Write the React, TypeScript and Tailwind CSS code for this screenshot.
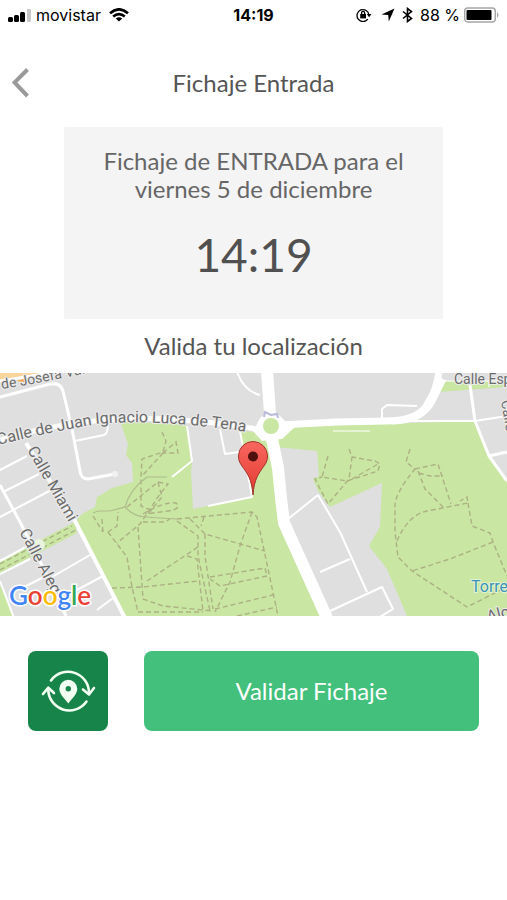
import React from 'react';

const ROADS: { d: string; w: number }[] = [
  // avenue and roundabout exits
  { d: 'M267 -2 L270 40 L272 66 L278 95 L281 125 L284 150 L327 245', w: 12 },
  { d: 'M280 52 L337 49 L385 48 Q420 48 428 30 Q437 16 439 -2', w: 7 },
  { d: 'M392 48 Q422 48 432 28 L443 6', w: 7 },
  { d: 'M400 48 L475 48 L507 43', w: 2 },
  { d: 'M382 46 V36 L387 32 L417 33', w: 2 },
  { d: 'M0 67 Q90 40 180 47 Q225 50 262 57', w: 5 },
  // north west blocks
  { d: 'M0 24 L50 11 Q60 9 63 18 L72 56 L80 98 Q81 106 88 106 L115 101', w: 3 },
  { d: 'M75 68 L104 62 Q108 61 108 51', w: 2 },
  { d: 'M0 8 Q50 0 90 -6', w: 3 },
  { d: 'M26 70 L75 148 L125 245', w: 4 },
  { d: 'M0 112 L20 149 L50 208 L66 243', w: 3 },
  { d: 'M0 97 L27 83 M3 119 L39 101 M0 144 L53 116', w: 2 },
  { d: 'M0 188 L26 174 M0 201 L30 186', w: 2 },
  { d: 'M52 204 L90 182 M62 225 L103 203 M97 237 L113 225 M20 216 L44 204 M0 208 L14 245', w: 2 },
  // around the pin
  { d: 'M187 53 L192 88 L172 104', w: 2 },
  { d: 'M220 56 L225 81 L239 79 M240 58 L252 124 L208 133', w: 2 },
  { d: 'M237 -1 Q244 18 260 22', w: 2 },
  // east blocks
  { d: 'M288 146 L318 122 L340 159 L367 219', w: 2 },
  { d: 'M320 199 L350 186 M330 238 L382 214 L393 236 L378 245', w: 2 },
  { d: 'M470 12 L475 48 L489 83 L507 108 M489 83 L507 79', w: 3 },
  { d: 'M443 8 L507 8 M489 8 V14', w: 1 },
  { d: 'M333 58 H370', w: 1 },
];

const TRAILS = [
  // west park
  'M177 146 L252 139 L257 144 L278 243',
  'M252 139 L240 173 L230 209 L215 239',
  'M190 146 L205 161 L265 178',
  'M177 148 L198 163 V183 L210 238',
  'M204 144 L201 153 M205 161 V183 L213 236',
  'M147 208 L198 174 M187 183 L197 186 L203 238',
  'M210 204 L265 195 L267 203 L220 213 L210 206',
  'M112 215 L143 214 L198 208 M215 236 L273 222',
  'M138 239 L203 239 M237 243 L277 234',
  'M162 59 L166 68 L163 79 L142 86 L141 104 V133 L153 138',
  'M163 80 L142 103 M163 80 L170 74 L176 69 L178 80 Z',
  'M127 134 L158 109 L168 111 L160 121 L140 151 L117 170',
  'M158 109 L162 124 L148 141',
  'M143 141 Q165 128 176 130 Q182 136 168 138 L146 141',
  'M143 149 H165 L170 146',
  'M103 159 L102 146 M93 143 L103 159 M108 159 L117 153 L118 139',
  'M108 159 L127 184 L132 214 L138 239',
  'M138 154 L143 226 L163 233 L213 238',
  // east park
  'M328 83 L322 104 L347 108 L378 98 L380 91 L375 88 L352 84',
  'M349 76 L352 84 L349 106 L328 131 L315 106 L322 104',
  'M352 106 L378 91',
  'M410 76 L406 89 L415 96 Q395 120 395 133 V159 L398 184 L412 198 L467 234 L507 214',
  'M415 96 L438 91 L451 131 M418 98 L425 116 L443 134 M419 100 L430 103 L443 103',
  'M397 168 Q408 142 427 138 L468 130 L467 124 L460 128',
  'M468 130 L472 153 L490 160 L493 169 L507 203',
  'M493 169 L450 186 L412 198',
  'M0 191 L72 153 M0 197 L76 157',
];

const LocationMap: React.FC = () => (
  <svg
    viewBox="0 0 507 243"
    className="block w-full h-auto bg-[#dfdfdf] font-['Roboto',sans-serif]"
    role="img"
    aria-label="Mapa"
  >
    <rect width="507" height="243" fill="#dfdfdf" />
    <path d="M0 0 H40 L20 4 L0 8 Z" fill="#fbd49a" />
    <path d="M16 8 L30 4 L24 9 Z" fill="#f8a842" />

    {/* Parks */}
    <g fill="#c9e6a2">
      <path d="M120 48 L187 52 L192 90 L191 98 L193 136 L252 124 L240 58 L271 60 L284 150 L328 243 H123 L75 149 L82 141 L95 134 L97 124 L112 115 L133 109 L132 90 L126 82 L128 71 Z" />
      <path d="M282 54 L475 48 L489 83 L507 108 V243 H407 L387 196 L369 173 L380 154 L382 110 L330 134 L318 118 L313 106 L319 103 L317 78 L276 74 Z" />
      <path d="M0 188 L75 149 L77 160 L0 200 Z" />
      <path d="M443 8 H507 V14 L438 19 Z" />
      <path d="M0 212 L14 243 H0 Z" />
    </g>

    <g fill="none" stroke="#acb184" strokeWidth="1.4" strokeDasharray="5 3">
      {TRAILS.map((d) => <path key={d} d={d} />)}
    </g>
    <path
      d="M93 140 L98 138 L110 138 L125 134 Q133 143 145 144 L177 146 M125 134 Q130 116 147 104 L167 104"
      fill="none" stroke="#aebb8c" strokeWidth="1.2"
    />

    <g fill="none" stroke="#fff" strokeLinejoin="round">
      {ROADS.map(({ d, w }) => <path key={d} d={d} strokeWidth={w} />)}
    </g>
    <circle cx="115" cy="101" r="3" fill="#f2f2f2" />
    <circle cx="39" cy="172" r="6" fill="#e9f4dc" />
    <path d="M252 57 L262 46 L280 43 L288 51 L296 53 L282 66 L262 68 Z" fill="#fff" />
    <circle cx="271" cy="54" r="14" fill="#fff" />
    <circle cx="271" cy="53" r="8" fill="#c9e6a2" />
    <path d="M264 44 L265 39 L271 42 L277 41 L278 45" fill="none" stroke="#b9b9da" strokeWidth="2" />

    {/* Street names */}
    <defs>
      <path id="luca" d="M-2 72 Q50 59 97 51 Q160 45 260 61" />
      <path id="josefa" d="M2 16 Q50 9 150 -14" />
    </defs>
    <g fill="#6b6b6b" stroke="#ececec" strokeWidth="2" paintOrder="stroke" fontSize="16">
      <text><textPath href="#luca">Calle de Juan Ignacio Luca de Tena</textPath></text>
      <text fontSize="14"><textPath href="#josefa">de Josefa Val</textPath></text>
      <text transform="translate(27 77) rotate(60)">Calle Miami</text>
      <text transform="translate(19 159) rotate(62)">Calle Alegría</text>
      <text x="454" y="11" fontSize="14">Calle Esp</text>
      <text transform="translate(501 28) rotate(80)" fontSize="14">Calle</text>
      <text transform="translate(488 249) rotate(-14)" fontSize="16">Alca</text>
    </g>
    <text x="471" y="219" fontSize="16" fill="#3993b4" stroke="#e6f3d6" strokeWidth="2" paintOrder="stroke">Torre</text>

    <text
      x="9" y="232" fontSize="26" stroke="#fff" strokeWidth="3" paintOrder="stroke"
      className="font-['Lato',sans-serif] font-semibold"
    >
      <tspan fill="#4285f4">G</tspan>
      <tspan fill="#ea4335">o</tspan>
      <tspan fill="#fbbc05">o</tspan>
      <tspan fill="#4285f4">g</tspan>
      <tspan fill="#34a853">l</tspan>
      <tspan fill="#ea4335">e</tspan>
    </text>

    {/* Pin */}
    <defs>
      <linearGradient id="pin" x1="0" y1="0" x2="0" y2="1">
        <stop offset="0" stopColor="#f8675f" />
        <stop offset="1" stopColor="#e2392f" />
      </linearGradient>
    </defs>
    <path
      d="M253 122 C252 106 247 100 242 93 C239 89 238.500 86 238.500 83 A14.500 14.500 0 0 1 267.500 83 C267.500 86 267 89 264 93 C259 100 254 106 253 122 Z"
      fill="url(#pin)" stroke="#a3332c" strokeWidth="1"
    />
    <circle cx="253" cy="83.500" r="5" fill="#50100d" />
  </svg>
);

const StatusBar: React.FC = () => (
  <div className="grid grid-cols-[1fr_auto_1fr] items-center h-[30px] px-2 text-black text-base font-['Inter',sans-serif]">
    <div className="flex items-center gap-1">
      <svg width="24" height="13" viewBox="0 0 24 13" aria-hidden="true">
        <rect x="0" y="8" width="5" height="5" rx="1.500" />
        <rect x="6" y="6" width="5" height="7" rx="1.500" />
        <rect x="12" y="3" width="5" height="10" rx="1.500" />
        <rect x="19" y="0" width="4" height="13" rx="1" fill="#c8c8c8" />
      </svg>
      <span>movistar</span>
      <svg className="ml-1" width="20" height="14" viewBox="0 0 20 14" fill="none" stroke="#000" strokeWidth="2.600" aria-hidden="true">
        <path d="M1 5.200 Q10 -2.600 19 5.200" />
        <path d="M4.200 8.600 Q10 3.600 15.800 8.600" />
        <path d="M10 13.500 L6.800 10.600 Q10 8 13.200 10.600 Z" fill="#000" stroke="none" />
      </svg>
    </div>
    <span className="font-bold">14:19</span>
    <div className="flex items-center justify-end gap-1">
      <svg width="17" height="14" viewBox="0 0 17 14" fill="none" stroke="#000" strokeWidth="1.300" aria-hidden="true">
        <path d="M11.800 11.200 A6 6 0 1 1 13 7" />
        <path d="M10.800 6 H15.400 L13.100 9.200 Z" fill="#000" stroke="none" />
        <rect x="4.200" y="6" width="5.800" height="4.400" fill="#000" stroke="none" />
        <path d="M5.600 6 V4.800 A1.500 1.500 0 0 1 8.600 4.800 V6" />
      </svg>
      <svg className="ml-1" width="14" height="14" viewBox="0 0 14 14" aria-hidden="true">
        <path d="M13.500 0.500 L7.800 13.500 L7.200 7 L0.500 6.400 Z" />
      </svg>
      <svg width="17" height="16" viewBox="0 0 17 16" fill="none" stroke="#000" strokeWidth="1.600" aria-hidden="true">
        <path d="M4 4.500 L12.500 11.500 L8.500 14.500 V1.500 L12.500 4.500 L4 11.500" />
      </svg>
      <span className="whitespace-nowrap">88 %</span>
      <svg width="35" height="16" viewBox="0 0 35 16" aria-hidden="true">
        <rect x="0.700" y="1" width="30.600" height="14" rx="3" fill="#fff" stroke="#a5a5a5" strokeWidth="1.400" />
        <rect x="2.500" y="3" width="25" height="10" rx="1" />
        <path d="M33 5 Q36 8 33 11 Z" fill="#a5a5a5" />
      </svg>
    </div>
  </div>
);

const App: React.FC = () => {
  return (
    <div className="min-h-screen bg-white text-[#555555] font-['Lato',sans-serif]">
      <StatusBar />

      <header className="grid grid-cols-[1fr_auto_1fr] items-center px-3 pt-[38px]">
        <button type="button" aria-label="Volver" className="justify-self-start">
          <svg width="18" height="30" viewBox="0 0 18 30" fill="none" stroke="#9a9a9a" strokeWidth="4">
            <path d="M15.500 1.500 L2.500 14.500 L15.500 28" />
          </svg>
        </button>
        <h1 className="text-2xl leading-7">Fichaje Entrada</h1>
      </header>

      <main>
        <section className="mx-16 mt-[29px] px-8 pt-5 pb-10 bg-[#f4f4f4] rounded-xs text-center">
          <p className="text-2xl leading-7 text-[#666666]">Fichaje de ENTRADA para el viernes 5 de diciembre</p>
          <p className="mt-7 text-[46px] leading-12 text-[#505050]">14:19</p>
        </section>

        <h2 className="py-[13px] text-2xl leading-7 text-center">Valida tu localización</h2>

        <LocationMap />

        <div className="flex items-stretch gap-9 px-7 pt-[35px]">
          <button type="button" aria-label="Actualizar localización" className="flex items-center justify-center size-20 shrink-0 rounded-lg bg-[#17854a]">
            <svg width="55" height="46" viewBox="0 0 55 46" fill="none" stroke="#f3fff3" strokeWidth="2.600" strokeLinecap="round" strokeLinejoin="round">
              <path d="M10 12.500 A21 21 0 0 1 48 25" />
              <path d="M42 21.500 L48 26.500 L53 20" />
              <path d="M45.500 33.500 A21 21 0 0 1 7.300 21" />
              <path d="M2 26 L7.300 19.700 L13 25" />
              <path
                d="M27.300 35.500 C24 31 18.300 26.500 18.300 20.800 A9 9 0 0 1 36.300 20.800 C36.300 26.500 30.600 31 27.300 35.500 Z M27.300 18 A2.700 2.700 0 1 0 27.300 23.400 A2.700 2.700 0 1 0 27.300 18 Z"
                fill="#f3fff3" fillRule="evenodd" stroke="none"
              />
            </svg>
          </button>
          <button type="button" className="flex-1 rounded-lg bg-[#42c07c] text-white text-2xl">
            Validar Fichaje
          </button>
        </div>
      </main>
    </div>
  );
};

export default App;
